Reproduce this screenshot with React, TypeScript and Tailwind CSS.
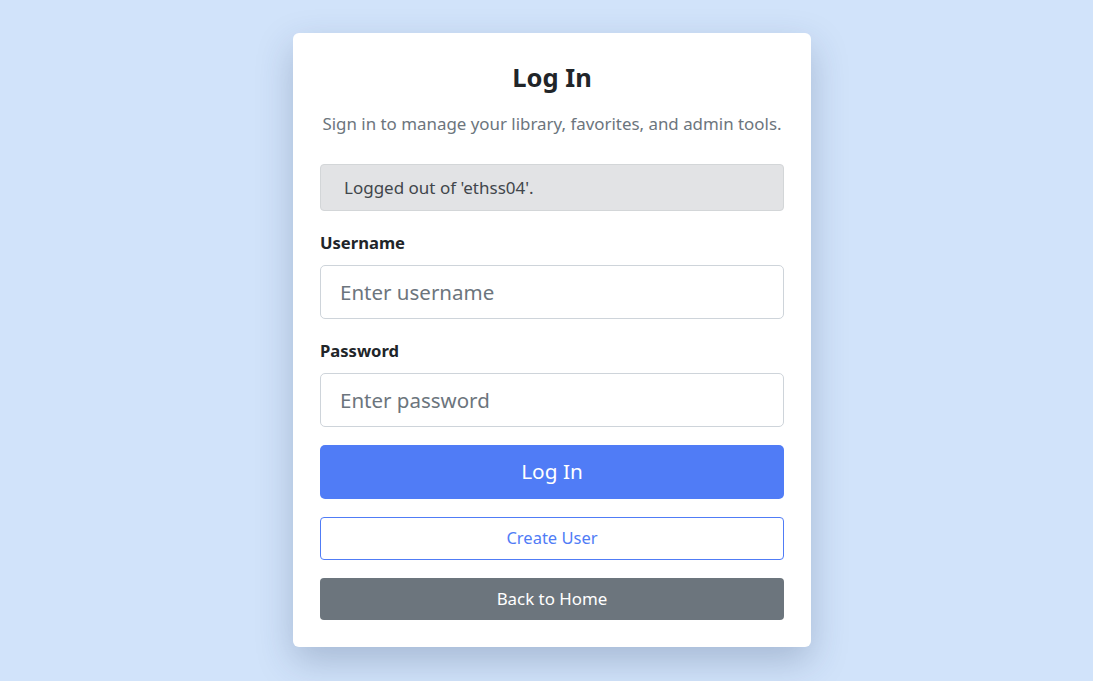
export default function App() {
  return (
    <div
      className="min-h-[681px] w-full bg-[#d1e3fa] flex justify-center items-start pt-[33px] pl-[11px]"
      style={{ fontFamily: '"Noto Sans", "Open Sans", sans-serif' }}
    >
      <div className="w-[518px] bg-white rounded-md shadow-[0_14px_36px_rgba(40,60,100,0.25)] px-[27px] pt-[22px] pb-[27px] flex flex-col">
        <h1 className="text-center text-[25.5px] font-bold text-[#212529] leading-[44px]">Log In</h1>
        <p className="text-center text-[16.9px] text-[#6c757d] mt-[13px] leading-[24px]">
          Sign in to manage your library, favorites, and admin tools.
        </p>

        <div className="mt-[28px] h-[47px] bg-[#e2e3e5] border border-[#d3d6d8] rounded-[4px] flex items-center pl-[23px] text-[17px] text-[#41464b]">
          Logged out of 'ethss04'.
        </div>

        <label className="mt-[20px] text-[16.6px] font-bold text-[#212529] leading-[24px]">Username</label>
        <input
          type="text"
          placeholder="Enter username"
          className="mt-[10px] h-[54px] border border-[#ced4da] rounded-[5px] px-[19px] text-[20.5px] text-[#212529] placeholder:text-[#6c757d] outline-none"
        />

        <label className="mt-[20px] text-[16.6px] font-bold text-[#212529] leading-[24px]">Password</label>
        <input
          type="password"
          placeholder="Enter password"
          className="mt-[10px] h-[54px] border border-[#ced4da] rounded-[5px] px-[19px] text-[20.5px] text-[#212529] placeholder:text-[#6c757d] outline-none"
        />

        <button className="mt-[18px] h-[54px] bg-[#507cf6] rounded-[5px] text-white text-[20.8px]">Log In</button>
        <button className="mt-[18px] h-[43px] border border-[#507cf6] rounded-[4px] text-[#507cf6] text-[16.5px] bg-white">
          Create User
        </button>
        <button className="mt-[18px] h-[42px] bg-[#6c757d] rounded-[4px] text-white text-[16.9px]">Back to Home</button>
      </div>
    </div>
  );
}
